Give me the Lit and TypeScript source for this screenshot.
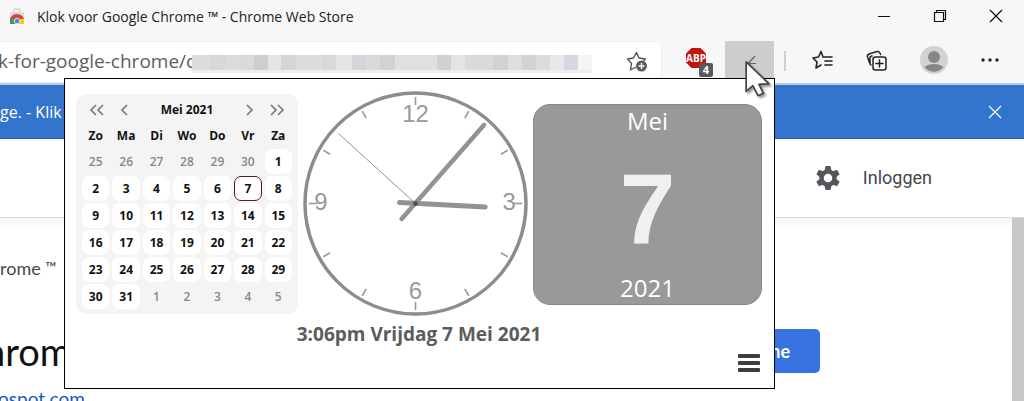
import { LitElement, html, css, svg } from "lit";
import { customElement } from "lit/decorators.js";
import { classMap } from "lit/directives/class-map.js";
import { styleMap } from "lit/directives/style-map.js";

const WEEKDAYS = ["Zo", "Ma", "Di", "Wo", "Do", "Vr", "Za"];

@customElement("month-calendar")
class MonthCalendar extends LitElement {
  static styles = css`
    :host { display: block; width: 216px; padding: 3px; background: #f4f4f4; border-radius: 10px;
      font: 600 12px/16px "Open Sans", "Noto Sans", sans-serif; color: #111; }
    .nav { display: flex; align-items: center; height: 26px; padding: 0 4px; }
    .nav button { display: grid; place-items: center; width: 28px; height: 26px; padding: 0; border: 0; background: none; }
    .nav svg { width: 16px; height: 14px; fill: none; stroke: #777; stroke-width: 1.6; }
    .title { flex: 1; text-align: center; font-weight: 700; }
    table { width: 100%; table-layout: fixed; border-collapse: separate; border-spacing: 3px 2px; }
    th, td { padding: 0; height: 25px; text-align: center; font-weight: 700; box-sizing: border-box; }
    th { height: 22px; }
    td { background: #fff; border: 1px solid #fff; border-radius: 7px; }
    td.other { background: none; border-color: transparent; color: #888; font-weight: 600; }
    td.today { border-color: #5d1322; }
  `;

  private weeks() {
    const first = new Date(2021, 4, 1);
    return Array.from({ length: 6 }, (_, w) =>
      Array.from({ length: 7 }, (_, d) => new Date(2021, 4, 1 - first.getDay() + w * 7 + d))
    );
  }

  private arrow(d: string, label: string) {
    return html`<button aria-label=${label}><svg viewBox="0 0 16 14">${svg`<path d=${d} />`}</svg></button>`;
  }

  render() {
    return html`
      <div class="nav">
        ${this.arrow("M7 2 L2 7 L7 12 M14 2 L9 7 L14 12", "Vorig jaar")}
        ${this.arrow("M10 2 L5 7 L10 12", "Vorige maand")}
        <span class="title">Mei 2021</span>
        ${this.arrow("M6 2 L11 7 L6 12", "Volgende maand")}
        ${this.arrow("M2 2 L7 7 L2 12 M9 2 L14 7 L9 12", "Volgend jaar")}
      </div>
      <table>
        <thead><tr>${WEEKDAYS.map((d) => html`<th>${d}</th>`)}</tr></thead>
        <tbody>
          ${this.weeks().map((week) => html`<tr>${week.map((day) => html`<td
            class=${classMap({ other: day.getMonth() !== 4, today: day.getMonth() === 4 && day.getDate() === 7 })}
          >${day.getDate()}</td>`)}</tr>`)}
        </tbody>
      </table>
    `;
  }
}

@customElement("analog-clock")
class AnalogClock extends LitElement {
  static styles = css`
    :host { display: block; width: 225px; }
    svg { display: block; width: 100%; }
    .rim { fill: #fff; stroke: #8c8c8c; stroke-width: 3.5; }
    .tick { stroke: #999; stroke-width: 1.6; }
    .num { font: 24px "Liberation Sans", sans-serif; fill: #999; text-anchor: middle; }
    .hand { stroke: #929292; stroke-linecap: round; }
    .hour { stroke-width: 5; }
    .minute { stroke-width: 4.5; }
    .second { stroke-width: 1; }
  `;

  render() {
    const ticks = Array.from({ length: 12 }, (_, i) => i * 30);
    return html`<svg viewBox="0 0 226 226" role="img" aria-label="Klok">
      <circle class="rim" cx="113" cy="113" r="111" />
      ${ticks.map((a) => svg`<line class="tick" x1="113" y1="6" x2="113" y2="14" transform="rotate(${a} 113 113)" />`)}
      <text class="num" x="113" y="31">12</text>
      <text class="num" x="207" y="120">3</text>
      <text class="num" x="113" y="209">6</text>
      <text class="num" x="18" y="120">9</text>
      <line class="hand second" x1="36" y1="43" x2="113" y2="113" />
      <line class="hand hour" x1="97" y1="112" x2="183" y2="116.500" />
      <line class="hand minute" x1="99" y1="128.500" x2="182" y2="34" />
      <circle cx="113" cy="113" r="2.500" fill="#555" />
    </svg>`;
  }
}

@customElement("clock-popup")
class ClockPopup extends LitElement {
  static styles = css`
    :host { display: block; box-sizing: border-box; background: #fff; border: 1px solid #000;
      padding: 12px 12px 16px 11px; font-family: "Open Sans", "Noto Sans", sans-serif; }
    .row { display: flex; align-items: flex-start; gap: 5px; }
    month-calendar { margin-top: 3px; }
    .card { flex: 1; display: flex; flex-direction: column; justify-content: space-between; align-items: center;
      box-sizing: border-box; height: 201px; margin-top: 13px; border: 1px solid #898989; border-radius: 17px;
      background: #999; color: #fff; font-size: 24px; line-height: 32px; }
    .day { font: 700 100px/100px "Liberation Sans", sans-serif; color: #f0f0f0; padding-top: 8px; }
    .caption { margin-top: 5px; text-align: center; font-size: 19px; line-height: 26px; font-weight: 700; color: #5c5c5c; }
    .foot { display: flex; justify-content: flex-end; margin-top: 2px; padding-right: 2px; }
    .foot button { display: grid; gap: 3px; width: 22px; padding: 5px 0 0; border: 0; background: none; }
    .foot i { height: 4px; background: #3d3d3d; border-radius: 1px; }
  `;

  render() {
    return html`
      <div class="row">
        <month-calendar></month-calendar>
        <analog-clock></analog-clock>
        <div class="card"><span>Mei</span><span class="day">7</span><span>2021</span></div>
      </div>
      <div class="caption">3:06pm Vrijdag 7 Mei 2021</div>
      <div class="foot"><button aria-label="Menu"><i></i><i></i><i></i></button></div>
    `;
  }
}

/* Masked part of the address: [colour, width] */
const MASK: [string, number][] = [
  ["#dcdcdc", 18], ["#d8d8d8", 16], ["#dcdbdb", 14], ["#d9dade", 14], ["#d1cdcd", 14], ["#e5e5e5", 13],
  ["#d5d5d5", 15], ["#dddddd", 26], ["#d9d9d9", 14], ["#e4e4e4", 16], ["#d3d7dc", 14], ["#dadada", 14],
  ["#d2d2d2", 15], ["#e1e0df", 42], ["#d0d1d3", 14], ["#e4e4e4", 14], ["#dcdad8", 28], ["#d3d2d0", 15],
  ["#dedede", 14], ["#d3d3d3", 14], ["#dcdcdc", 14], ["#e6e8ea", 14], ["#d5d9df", 14], ["#f4f4f4", 14],
];

@customElement("app-root")
class AppRoot extends LitElement {
  static styles = css`
    :host { display: flex; flex-direction: column; position: relative; height: 100vh; overflow: hidden;
      background: #fff; color: #222; font-family: "Open Sans", "Noto Sans", sans-serif; }
    button { padding: 0; border: 0; background: none; font: inherit; color: inherit; display: grid; place-items: center; }
    svg { display: block; fill: none; stroke: currentColor; }
    .titlebar { display: flex; align-items: center; flex: none; height: 41px; background: #f7f7f7; padding: 0 21px 8px 9px;
      font-size: 14px; line-height: 20px; box-sizing: border-box; }
    .fav { margin-right: 12px; stroke: none; }
    .grow { flex: 1; }
    .win { display: flex; gap: 42px; color: #111; padding-bottom: 2px; }
    .toolbar { display: flex; align-items: center; flex: none; height: 44px; box-sizing: border-box; background: #f7f7f7;
      border-bottom: 2px solid #b9cbe6; color: #222; }
    .address { flex: 1; display: flex; align-items: center; align-self: stretch; background: #fff; border: 1px solid #efefef;
      border-left: 0; border-radius: 0 6px 0 0; padding-right: 12px; margin-right: 23px; min-width: 0;
      box-sizing: border-box; overflow: hidden; }
    .url { font-size: 19px; line-height: 28px; color: #5d5d5d; width: 194px; flex: none; margin-left: -2px;
      white-space: nowrap; overflow: hidden; padding-bottom: 2px; }
    .mask { display: flex; flex: none; height: 15px; margin-top: 4px; border-bottom: 3px solid #efefef; }
    .abp { position: relative; width: 28px; height: 30px; margin-right: 12px; place-items: start; }
    .plain { stroke: none; }
    .badge { position: absolute; right: 0; bottom: 0; width: 14px; height: 14px; border-radius: 2px; background: #5a5a5a;
      color: #fff; font-size: 11px; line-height: 14px; font-weight: 700; text-align: center; }
    .ext { width: 49px; align-self: stretch; background: #cdcdcd; color: #666; }
    .sep { width: 2px; height: 20px; margin: 0 26px 3px 10px; background: #cfcfcf; }
    .tools { display: flex; align-items: center; gap: 33px; padding: 0 25px 4px 0; }
    .avatar { width: 28px; height: 28px; }
    .dots { fill: #222; stroke: none; }
    .notice { display: flex; align-items: center; flex: none; justify-content: space-between; height: 54px; background: #3375cd;
      color: #fff; font-size: 16px; padding: 0 22px 0 0; box-sizing: border-box; border-bottom: 1px solid #2860ad; }
    .account { display: flex; align-items: center; justify-content: flex-end; flex: none; height: 79px; padding-right: 92px;
      gap: 22px; font: 18px/24px Roboto, sans-serif; color: #44474c; box-sizing: border-box; border-bottom: 1px solid #d9d9d9; }
    .account a { color: inherit; text-decoration: none; }
    .content { flex: 1; display: flex; min-height: 0; font-family: Lato, sans-serif; }
    .page { flex: 1; display: flex; flex-direction: column; background: linear-gradient(#f5f5f5, #fff 10px); overflow: hidden; }
    .crumb { margin-top: 38px; font-size: 18px; line-height: 24px; color: #44474c; }
    .crumb sup { font-size: 15px; line-height: 0; vertical-align: 2px; }
    .head { display: flex; align-items: center; justify-content: space-between; margin-top: 49px; padding-right: 192px; height: 44px; }
    .head h1 { margin: 0 0 0 -16px; font: 400 38px/44px Lato, sans-serif; color: #111; }
    .add { width: 180px; height: 44px; border-radius: 5px; background: #3871e0; color: #fff; font-size: 18px; line-height: 24px;
      font-weight: 700; justify-items: end; padding-right: 30px; }
    .site { margin: 14px 0 0 -2px; font-size: 19px; line-height: 24px; color: #1a56c4; text-decoration: none; }
    .scroll { width: 12px; background: #c8c8c8; }
    clock-popup { position: absolute; top: 78px; right: 249px; width: 711px; }
    .cursor { position: absolute; top: 60px; right: 249px; width: 31px; height: 40px; filter: drop-shadow(2px 2px 1px #0006); }
  `;

  private close() {
    return html`<button aria-label="Sluiten"><svg width="14" height="14" viewBox="0 0 14 14" stroke-width="1.2"><path d="M1 1 L13 13 M13 1 L1 13" /></svg></button>`;
  }

  render() {
    const teeth = [0, 60, 120, 180, 240, 300];
    return html`
      <div class="titlebar">
        <svg class="fav" width="16" height="17" viewBox="0 0 16 17">
          <path fill="#dadada" d="M1 4h14v12H1z" /><path fill="none" stroke="#c6c6c6" d="M5 4V1h6v3" />
          <path fill="#d94334" d="M1 12a7 6 0 0 1 14 0l-4 0-3-2-3 2z" />
          <path fill="#35a153" d="M1 11l4 0 2 5H1z" /><path fill="#f8c530" d="M11 11h4v5H9z" />
          <circle cx="8" cy="13" r="2.800" fill="#4588f0" stroke="#fff" stroke-width=".7" />
        </svg>
        <span>Klok voor Google Chrome ™ - Chrome Web Store</span>
        <span class="grow"></span>
        <div class="win">
          <button aria-label="Minimaliseren"><svg width="14" height="14" viewBox="0 0 14 14"><path d="M1 7.500h12" /></svg></button>
          <button aria-label="Vorig formaat"><svg width="14" height="14" viewBox="0 0 14 14" stroke-width="1.2"><path d="M1.500 3.500h9v9h-9z M3.500 3.500v-2h9v9h-2" /></svg></button>
          ${this.close()}
        </div>
      </div>

      <div class="toolbar">
        <div class="address">
          <span class="url">k-for-google-chrome/c</span>
          <span class="mask">${MASK.map(([c, w]) => html`<span style=${styleMap({ background: c, width: `${w}px` })}></span>`)}</span>
          <span class="grow"></span>
          <button aria-label="Favoriet toevoegen"><svg width="23" height="22" viewBox="0 0 23 22" stroke-width="1.400" stroke-linejoin="round">
            <path d="M10 16l-5.500 3 1-6.500L1.500 8l6-1L10.500 1.500 13 7l6.500 1-2 2" stroke="#555" />
            <circle cx="15.500" cy="15" r="5.500" fill="#5c5c5c" stroke="none" /><path d="M15.500 12v6 M12.500 15h6" stroke="#fff" />
          </svg></button>
        </div>
        <button class="abp" aria-label="Adblock Plus">
          <svg class="plain" width="22" height="22" viewBox="0 0 22 22"><path fill="#c3150f" d="M6.500 1h9L21 6.500v9L15.500 21h-9L1 15.500v-9z" />
            <text x="11" y="15" text-anchor="middle" fill="#fff" font-size="10" font-weight="700" font-family="Open Sans, sans-serif">ABP</text></svg>
          <span class="badge">4</span>
        </button>
        <button class="ext" aria-label="Klok"><svg width="18" height="16" viewBox="0 0 18 16"><path d="M14 2L7 9.500h8" stroke-width="1.200" /></svg></button>
        <span class="sep"></span>
        <div class="tools">
          <button aria-label="Favorieten"><svg width="21" height="20" viewBox="0 0 21 20" stroke-width="1.600" stroke-linejoin="round" stroke-linecap="round">
            <path d="M11 7L9 1.500 6.500 7 1 8l4 4-1 6 5-3M12 7h8M13 11h7M13 15h7" /></svg></button>
          <button aria-label="Verzamelingen"><svg width="21" height="21" viewBox="0 0 21 21" stroke-width="1.500" stroke-linecap="round">
            <path d="M4 14l-2.500-7Q1 5 3 4l8-2.500q2-.5 3 1.500l.5 1.500M4 14V8q0-2 2-2M4 14l1 1" />
            <rect x="7" y="7" width="13" height="13" rx="2.500" /><path d="M13.500 10v7M10 13.500h7" /></svg></button>
          <button class="avatar" aria-label="Profiel"><svg class="plain" width="28" height="28" viewBox="0 0 28 28">
            <circle cx="14" cy="14" r="14" fill="#d2d2d2" /><circle cx="14" cy="11" r="6" fill="#868686" />
            <path fill="#868686" d="M4.500 21q4-3 9.500-3t9.500 3a12 12 0 0 1-19 0z" /></svg></button>
          <button aria-label="Meer"><svg class="dots" width="18" height="4" viewBox="0 0 18 4">
            <circle cx="2" cy="2" r="1.700" /><circle cx="9" cy="2" r="1.700" /><circle cx="16" cy="2" r="1.700" /></svg></button>
        </div>
      </div>

      <div class="notice"><span>ge. - Klik o</span>${this.close()}</div>

      <div class="account">
        <button aria-label="Instellingen"><svg class="plain" width="26" height="26" viewBox="0 0 26 26">
          ${teeth.map((a) => svg`<path fill="#54585d" transform="rotate(${a} 13 13)" d="M10.500 1h5l1 5h-7z" />`)}
          <circle cx="13" cy="13" r="6.500" stroke="#54585d" stroke-width="4.500" /></svg></button>
        <a href="#">Inloggen</a>
      </div>

      <div class="content">
        <div class="page">
          <div class="crumb">rome <sup>™</sup></div>
          <div class="head"><h1>hrome</h1><button class="add">ne</button></div>
          <a class="site" href="#">ospot.com</a>
        </div>
        <div class="scroll"></div>
      </div>

      <clock-popup></clock-popup>
      <svg class="cursor" viewBox="0 0 32 42"><path fill="#fff" stroke="#444" stroke-width="1.800" stroke-linejoin="round"
        d="M2 2V33L9 27L14.500 37.500L20 35L15.500 25.500L26 25Z" /></svg>
    `;
  }
}
